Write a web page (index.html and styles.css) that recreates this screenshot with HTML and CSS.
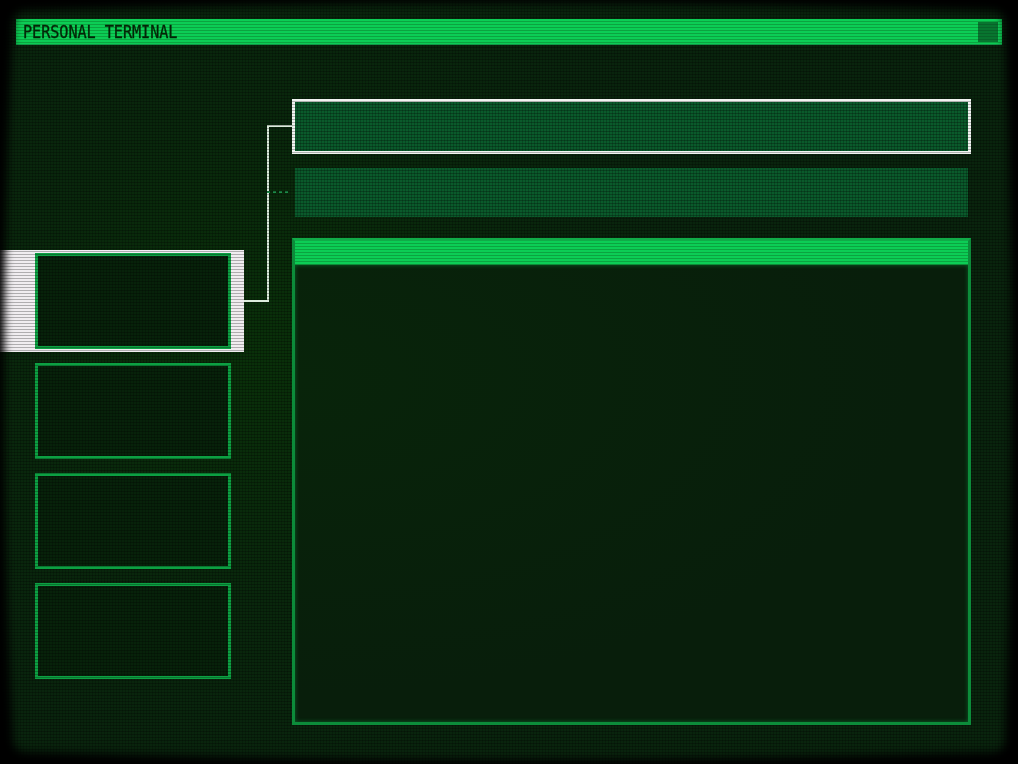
FILE: index.html
```
<!DOCTYPE html>
<html lang="en">
<head>
<meta charset="utf-8">
<title>Personal Terminal</title>
<link rel="stylesheet" href="styles.css">
</head>
<body>
<main class="terminal">
  <header class="titlebar"><h1 class="title">PERSONAL TERMINAL</h1><span class="window-button"></span></header>
  <div class="workspace">
    <nav class="sidebar">
      <div class="slot selected"><div class="slot-box"></div></div>
      <div class="slot"><div class="slot-box"></div></div>
      <div class="slot"><div class="slot-box"></div></div>
      <div class="slot"><div class="slot-box"></div></div>
    </nav>
    <section class="content">
      <div class="entry active"></div>
      <div class="entry"></div>
      <article class="panel"><div class="panel-head"></div><div class="panel-body"></div></article>
    </section>
  </div>
  <svg class="connector" width="1018" height="764" viewBox="0 0 1018 764" fill="none">
    <path d="M244 301H268V126H293" stroke="#dcebdc" stroke-width="2"/>
    <path d="M267 192H290" stroke="#1c8c48" stroke-width="2" stroke-dasharray="3 3"/>
  </svg>
  <div class="scanlines"></div>
  <svg class="bezel" width="1018" height="764" viewBox="0 0 1018 764">
    <defs><filter id="soft" filterUnits="userSpaceOnUse" x="-60" y="-60" width="1138" height="884"><feGaussianBlur stdDeviation="4"/></filter></defs>
    <path filter="url(#soft)" fill="#000" fill-rule="evenodd" d="M-50-50H1068V814H-50Z M24 11Q509-5 994 11Q1003 12 1005 22Q1018 382 1005 742Q1003 751 994 752Q509 767 24 752Q15 751 13 742Q-5 382 13 22Q15 12 24 11Z"/>
  </svg>
</main>
</body>
</html>
```
FILE: styles.css
```
:root {
  --columns: repeating-linear-gradient(90deg, rgba(0, 0, 0, 0) 0 2px, rgba(0, 0, 0, .2) 2px 3px);
  --bar: repeating-linear-gradient(#0ccd55 0 2px, #0ba440 2px 3px);
}
* { box-sizing: border-box; }
body { margin: 0; background: #000; overflow: hidden; }
.terminal {
  position: relative;
  width: 1018px;
  height: 764px;
  padding-top: 19px;
  overflow: hidden;
  background: var(--columns), radial-gradient(ellipse 420px 420px at 260px 350px, #093009, #09270c 60%, #09240d);
}
.titlebar {
  position: relative;
  z-index: 3;
  display: flex;
  align-items: center;
  justify-content: space-between;
  width: 986px;
  height: 26px;
  margin: 0 16px;
  padding: 0 4px 0 7px;
  background: var(--bar);
  border-bottom: 1px solid #119646;
}
.title {
  margin: 0;
  padding-top: 2px;
  font: 400 17.5px/25px "DejaVu Sans Mono", monospace;
  letter-spacing: -.06px;
  color: #042407;
  -webkit-text-stroke: .35px #042407;
  white-space: pre;
  transform: scaleX(.867);
  transform-origin: left center;
}
.window-button { width: 20px; height: 20px; background: repeating-linear-gradient(#08752f 0 2px, #086329 2px 3px); }
.workspace { display: flex; height: 719px; }
.sidebar { width: 292px; padding-top: 205px; }
.slot { width: 244px; height: 102px; margin-bottom: 8px; padding: 3px 13px 3px 35px; }
.slot-box { height: 96px; border: 3px solid #0ca042; background: var(--columns), #07220a; }
.selected { background: #f0edf0; }
.content { width: 679px; padding-top: 54px; }
.entry { height: 49px; margin: 0 3px 21px; background: var(--columns), #0a5a2b; }
.entry.active { height: 55px; margin: 0 0 14px; border: 3px solid #f0f3f0; }
.panel { position: relative; z-index: 3; height: 487px; border: 3px solid #0c8c3a; border-top-color: #10ab48; }
.panel-head { height: 24px; background: var(--bar); border-bottom: 1px solid #0c8c37; }
.panel-body { height: 457px; background: radial-gradient(ellipse at 0 25%, #08240a, #081e0b 65%); box-shadow: inset 0 0 4px #0b6129; }
.connector { position: absolute; inset: 0; }
.scanlines {
  position: absolute;
  inset: 0;
  z-index: 2;
  background: repeating-linear-gradient(rgba(0, 0, 0, 0) 0 2px, rgba(0, 0, 0, .27) 2px 3px);
}
.bezel { position: absolute; inset: 0; z-index: 4; }
```
